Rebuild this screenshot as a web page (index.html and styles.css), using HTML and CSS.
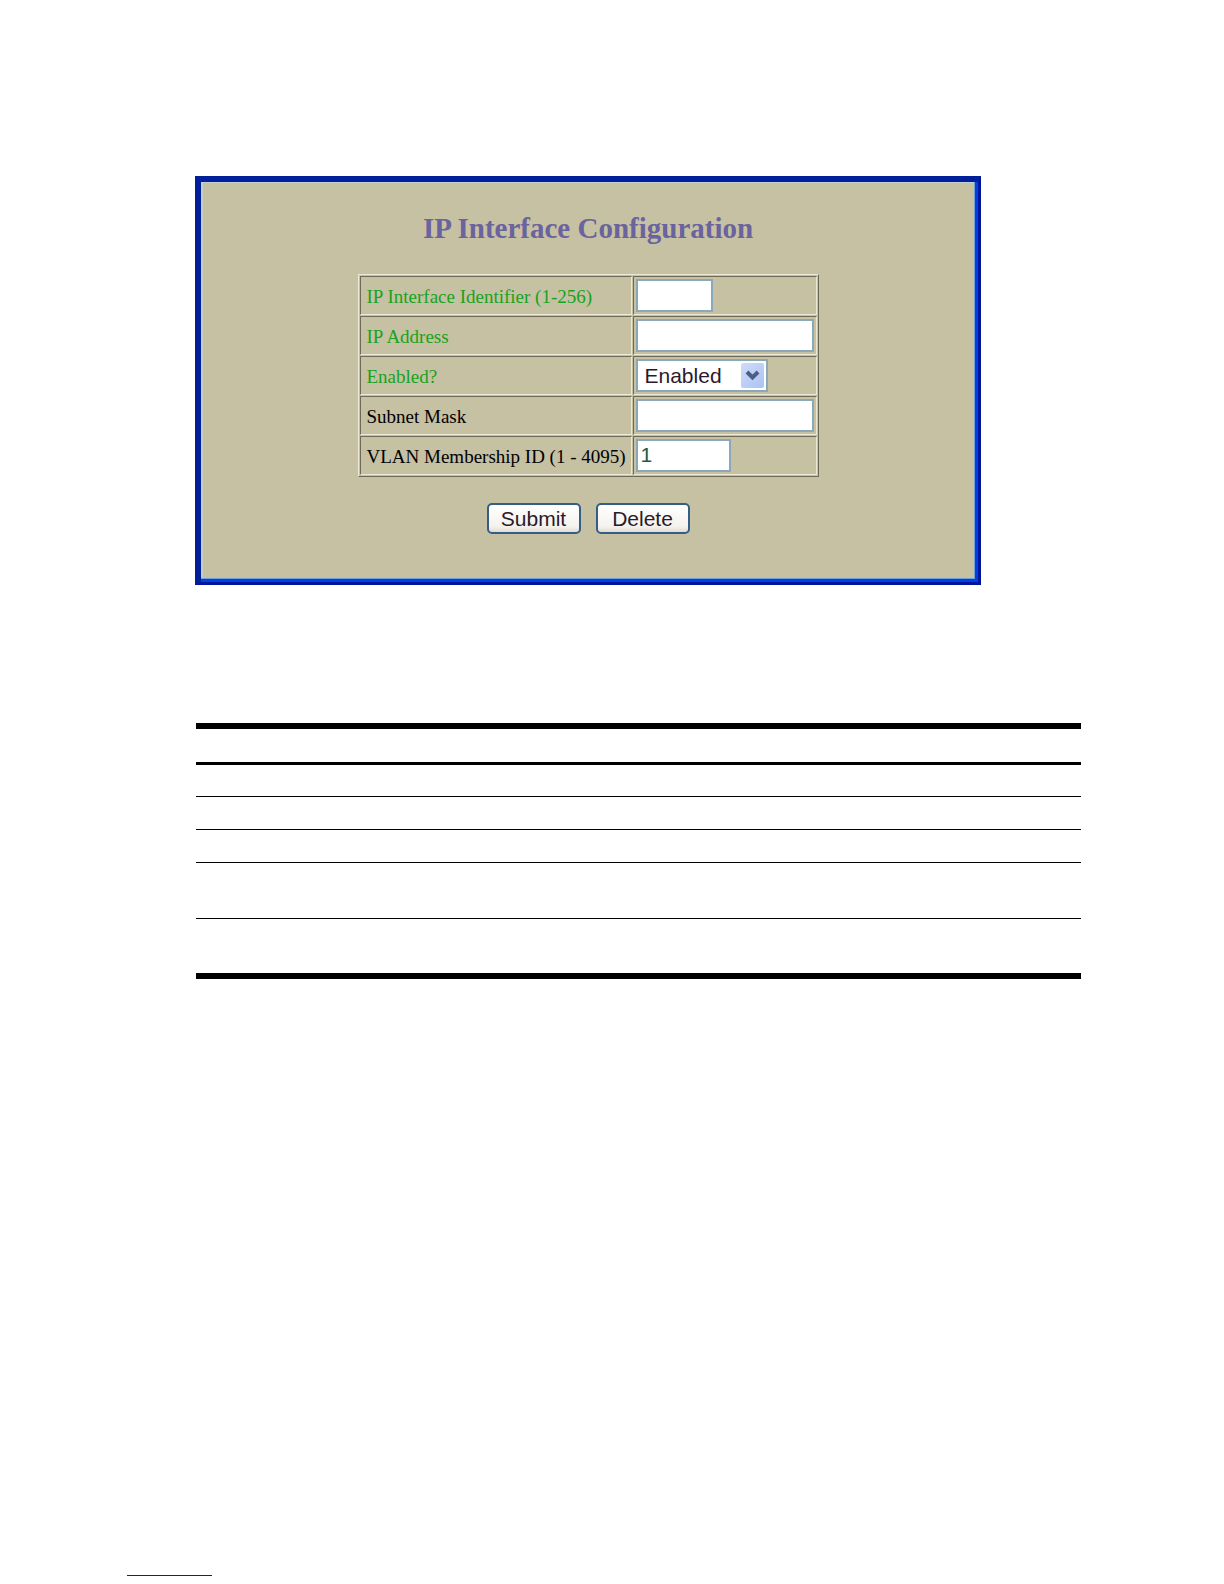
FILE: index.html
```html
<!DOCTYPE html>
<html lang="en">

<head>
  <meta charset="UTF-8" />
  <meta name="viewport" content="width=device-width, initial-scale=1.0" />
  <title>IP Interface Configuration</title>
  <link rel="stylesheet" href="styles.css">
</head>

<body>
  <main class="content">
    <form class="panel" action="#" method="post">
      <h1>IP Interface Configuration</h1>
      <table class="config">
        <tr>
          <td class="key"><label for="if_id">IP Interface Identifier (1-256)</label></td>
          <td><input type="text" id="if_id" name="if_id" class="short" /></td>
        </tr>
        <tr>
          <td class="key"><label for="if_addr">IP Address</label></td>
          <td><input type="text" id="if_addr" name="if_addr" /></td>
        </tr>
        <tr>
          <td class="key"><label for="if_state">Enabled?</label></td>
          <td>
            <div class="select">
              <select id="if_state" name="if_state">
                <option selected>Enabled</option>
                <option>Disabled</option>
              </select>
              <svg class="arrow" viewBox="0 0 23 25" aria-hidden="true">
                <path d="M6 9l5.500 5.500L17 9" fill="none" stroke="#4a5f86" stroke-width="4" />
              </svg>
            </div>
          </td>
        </tr>
        <tr>
          <td><label for="if_mask">Subnet Mask</label></td>
          <td><input type="text" id="if_mask" name="if_mask" /></td>
        </tr>
        <tr>
          <td><label for="if_vlan">VLAN Membership ID (1 - 4095)</label></td>
          <td><input type="text" id="if_vlan" name="if_vlan" class="medium" value="1" /></td>
        </tr>
      </table>
      <div class="buttons">
        <button type="submit">Submit</button>
        <button type="button">Delete</button>
      </div>
    </form>

    <table class="rules">
      <thead>
        <tr><th></th></tr>
      </thead>
      <tbody>
        <tr><td></td></tr>
        <tr><td></td></tr>
        <tr><td></td></tr>
        <tr class="tall"><td></td></tr>
        <tr class="tall"><td></td></tr>
      </tbody>
    </table>
  </main>

  <footer>
    <div class="footer-line"></div>
  </footer>
</body>

</html>
```

FILE: styles.css
```css
* {
  box-sizing: border-box;
}

body {
  margin: 0;
  min-height: 100vh;
  display: flex;
  flex-direction: column;
  background: #fff;
  color: #000;
  font-family: "Liberation Serif", serif;
  font-size: 19px;
}

.content {
  flex: 1;
  padding: 176px 143px 0 195px;
}

.panel {
  max-width: 786px;
  padding: 28px 3px 48px 0;
  display: flex;
  flex-direction: column;
  align-items: center;
  background: #c6c1a2;
  border: 6px solid #00209a;
  border-right: 3px solid #0014a0;
  border-bottom: 3px solid #0014a0;
  box-shadow: inset -3px -3px #0040dc, inset -4px -4px #6f9fd8, inset 2px 1px #c4ccd2;
}

h1 {
  margin: 0 0 28px;
  color: #6a639e;
  font-size: 29px;
  line-height: 36px;
}

.config {
  width: 461px;
  border: 1px solid;
  border-color: #ece8d6 #6f6a58 #6f6a58 #ece8d6;
  border-spacing: 1px;
}

.config td {
  height: 39px;
  padding: 2px;
  border: 1px solid;
  border-color: #6f6a58 #ece8d6 #ece8d6 #6f6a58;
}

.config td:first-child {
  width: 272px;
  padding: 4px 0 2px 6px;
  line-height: 24px;
  white-space: nowrap;
}

.config .key {
  color: #18a31c;
}

input,
select {
  display: block;
  width: 178px;
  height: 33px;
  margin: 0;
  padding: 0 3px 2px;
  background: #fff;
  border: 2px solid #8ba8b9;
  border-radius: 0;
  color: #1f5a45;
  font-family: "Liberation Sans", sans-serif;
  font-size: 21px;
}

.short {
  width: 77px;
}

.medium {
  width: 95px;
}

.select {
  position: relative;
  width: 132px;
}

select {
  appearance: none;
  width: 100%;
  padding: 0 7px;
  color: #2b1a2b;
}

.arrow {
  position: absolute;
  top: 4px;
  right: 4px;
  width: 23px;
  height: 25px;
  background: linear-gradient(135deg, #cfdcfa, #acc2f3);
  border-radius: 2px;
  pointer-events: none;
}

.buttons {
  display: flex;
  gap: 15px;
  margin-top: 26px;
}

button {
  width: 94px;
  height: 31px;
  padding: 0;
  background: linear-gradient(#fff, #f4f2ec 80%, #e2dccf);
  border: 2px solid #335f86;
  border-radius: 5px;
  color: #2b1a2b;
  font-family: "Liberation Sans", sans-serif;
  font-size: 21px;
}

.rules {
  width: 100%;
  margin-top: 138px;
  border-spacing: 0;
  border-left: 1px solid #fff;
}

.rules th {
  height: 42px;
  padding: 0;
  border-top: 6px solid #000;
  border-bottom: 3px solid #000;
}

.rules td {
  height: 33px;
  padding: 0;
  border-bottom: 1px solid #000;
}

.rules tbody tr:first-child td {
  height: 32px;
}

.rules .tall td {
  height: 56px;
}

.rules tr.tall:last-child td {
  height: 60px;
  border-bottom: 6px solid #000;
}

footer {
  padding: 0 127px 8px;
}

.footer-line {
  width: 85px;
  border-bottom: 1px solid #1a1a80;
}
```
